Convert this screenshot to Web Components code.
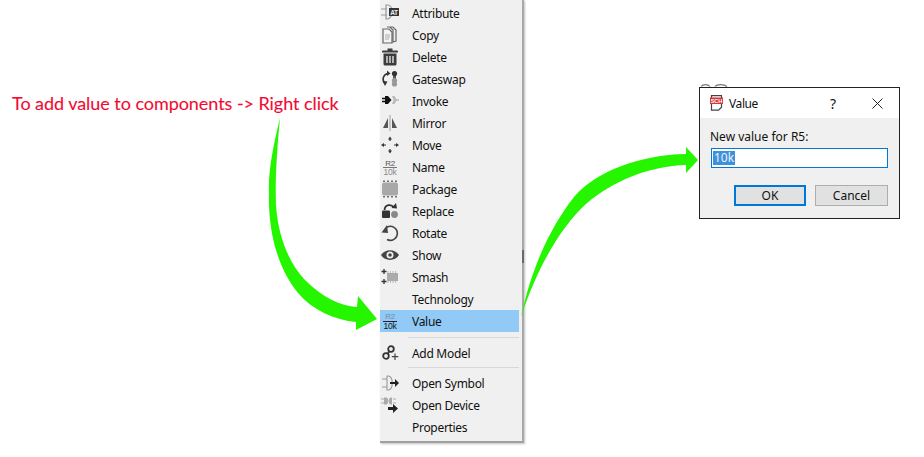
<!DOCTYPE html>
<html><head><meta charset="utf-8">
<style>html,body{margin:0;padding:0;background:#fff}</style></head>
<body>
<wiring-page></wiring-page>
<script>
const I={
attr:'<g fill="none" stroke="#999" stroke-width="1.200"><path d="M1 6h6M1 12h6M6 2h2c5 1 6 11 0 14H6z"/></g><rect x="9" y="5" width="10" height="8" fill="#333"/><text x="14" y="11.700" font-size="6.500" font-weight="700" fill="#eee" text-anchor="middle" font-family="Liberation Sans">AT</text>',
copy:'<path d="M7 2h6l3 3v11l-3 1V5L10 2z" fill="none" stroke="#666" stroke-width="1.200"/><path d="M3 4h6l3 3v11H3z" fill="#f3f3f3" stroke="#666" stroke-width="1.200"/><path d="M5 10h5M5 12h5M5 14h4" stroke="#aaa"/>',
del:'<path d="M7.500 1.500h5v2h4.500a1 1 0 0 1 1 1v1H2v-1a1 1 0 0 1 1-1h4.500z" fill="#3c3c3c"/><path d="M3.500 6.500h13V17a1.500 1.500 0 0 1-1.500 1.500H5A1.500 1.500 0 0 1 3.500 17z" fill="#3c3c3c"/><path d="M7 9v7M10 9v7M13 9v7" stroke="#eee" stroke-width="1.300"/>',
gate:'<path d="M8 4.500C3 5.500 1.500 11 5 14.500" fill="none" stroke="#333" stroke-width="1.500"/><path d="M7 1.500l3.500 3L7 7zM2.500 12l5 .5-2.500 4.500z" fill="#333"/><circle cx="14.500" cy="4.500" r="2.600" fill="#333"/><rect x="13" y="7" width="3" height="3" fill="#555"/><circle cx="14.500" cy="11.500" r="2.600" fill="#999"/><circle cx="14.500" cy="15" r="2.600" fill="#999"/>',
inv:'<path d="M2 7.500h3M2 10.500h3" stroke="#111" stroke-width="1.300"/><path d="M5 5h3l3.500 4L8 13H5z" fill="#111"/><path d="M12 5h2.500l2.500 4-2.500 4H12l1.500-4z" fill="#bbb"/><path d="M16 9h3" stroke="#bbb" stroke-width="1.500"/>',
mir:'<path d="M10 2v16" stroke="#aaa" stroke-width="1.200"/><path d="M8 5v10H3z" fill="#555"/><path d="M12 5v10h5z" fill="#555"/>',
move:'<g fill="#333"><path d="M10 1.500l2 3H8zM10 18.500l-2-3h4zM1 10l3-2v4zM19 10l-3-2v4z"/></g><path d="M10 4v2M10 14v2M4 10h2M14 10h2" stroke="#333" stroke-width="1.200"/>',
name:'<text x="10" y="8.500" font-size="8" fill="#555" text-anchor="middle" font-family="Liberation Sans">R2</text><path d="M3 10.500h14" stroke="#777"/><text x="10" y="18" font-size="8.500" fill="#888" text-anchor="middle" font-family="Liberation Sans">10k</text>',
pack:'<rect x="2" y="3.500" width="16" height="13" rx="2" fill="#a8a8a8"/><path d="M4 1.500v1.500M8 1.500v1.500M12 1.500v1.500M16 1.500v1.500M4 17v1.500M8 17v1.500M12 17v1.500M16 17v1.500" stroke="#444" stroke-width="1.500"/>',
repl:'<rect x="2" y="9.500" width="8" height="7.500" rx="1" fill="#333"/><circle cx="14.500" cy="13.500" r="3.400" fill="#888"/><path d="M4.500 9C5 3.500 11 2.500 14 6.500" fill="none" stroke="#333" stroke-width="1.800"/><path d="M11.500 7l5.500.5-1-5.500z" fill="#333"/>',
rot:'<path d="M7 4.200A7 7 0 1 1 7 16.500" fill="none" stroke="#444" stroke-width="1.600"/><path d="M1.500 10.500l5.500-7.500 1 8z" fill="#444" transform="translate(0 -1)"/>',
show:'<path d="M1 10c4-6.500 14-6.500 18 0-4 6.500-14 6.500-18 0z" fill="#444"/><circle cx="10" cy="10" r="3.500" fill="#eee"/><circle cx="10" cy="10" r="1.800" fill="#444"/>',
smash:'<rect x="7" y="6" width="11" height="8" fill="#aaa"/><path d="M8 4.500v1M10.500 4.500v1M13 4.500v1M15.500 4.500v1M8 14.500v1M10.500 14.500v1M13 14.500v1M15.500 14.500v1" stroke="#888"/><path d="M4 2v5M1.500 4.500h5M4 12v5M1.500 14.500h5" stroke="#333" stroke-width="1.300"/>',
val:'<text x="10" y="8" font-size="8" fill="#7b8da1" text-anchor="middle" font-family="Liberation Sans">R2</text><path d="M3 10.500h14" stroke="#223"/><text x="10" y="18" font-size="8.500" fill="#111" text-anchor="middle" font-family="Liberation Sans">10k</text>',
model:'<circle cx="6" cy="13" r="2.800" fill="none" stroke="#333" stroke-width="1.800"/><circle cx="11" cy="6" r="2.800" fill="none" stroke="#333" stroke-width="1.800"/><path d="M7.500 11l2-3" stroke="#333" stroke-width="1.800"/><path d="M15 10.500v6.500M11.800 13.700h6.500" stroke="#444" stroke-width="1.200"/>',
osym:'<path d="M2 6h5M2 14h5M7 3h1.500c5 1 5 13 0 14H7z" fill="none" stroke="#999" stroke-width="1.100"/><path d="M10 9h5V6l4 4-4 4v-3h-5z" fill="#222"/>',
odev:'<path d="M4 2.500v7h2c3 0 3-7 0-7zM12 2.500v7h-1c-3 0-3-7 0-7z" fill="#aaa"/><path d="M1 4h3M1 8h3M13 4h3M13 8h3" stroke="#aaa"/><path d="M8 12h5V9l5 4.500-5 4.500v-3H8z" fill="#222"/>'
};
const svg=(k)=>k?`<svg viewBox="0 0 20 20" width="20" height="20">${I[k]}</svg>`:'';

class MenuItem extends HTMLElement{
  constructor(){super();const s=this.attachShadow({mode:'open'});
    s.innerHTML=`<style>
    :host{display:flex;align-items:center;height:22px;color:#111;font:12px "Noto Sans","Open Sans",sans-serif;letter-spacing:-.3px}
    :host([active]){background:#91c9f7}
    .i{width:20px;height:20px;flex:none}
    .t{margin-left:12px;white-space:nowrap}
    svg{display:block}
    </style><div class="i"></div><div class="t"><slot></slot></div>`}
  connectedCallback(){this.shadowRoot.querySelector('.i').innerHTML=svg(this.getAttribute('icon'))}
}
customElements.define('menu-item',MenuItem);

class MenuSep extends HTMLElement{
  constructor(){super();this.attachShadow({mode:'open'}).innerHTML=`<style>:host{display:block;height:1px;margin:4px 0 4px 28px;background:#d8d8d8}</style>`}
}
customElements.define('menu-sep',MenuSep);

class ContextMenu extends HTMLElement{
  constructor(){super();this.attachShadow({mode:'open'}).innerHTML=`<style>
  :host{display:block;width:139px;padding:2px 3px 3px 0;background:#f0f0f0;border-right:2px solid #a8a8a8;border-bottom:2px solid #a0a0a0;box-shadow:1px 1px 2px rgba(0,0,0,.25)}
  </style><slot></slot>`}
}
customElements.define('context-menu',ContextMenu);

class DlgButton extends HTMLElement{
  constructor(){super();this.attachShadow({mode:'open'}).innerHTML=`<style>
  :host{display:flex;align-items:center;justify-content:center;box-sizing:border-box;height:21px;background:#e1e1e1;border:1px solid #adadad;color:#111;font:12px "Noto Sans","Open Sans",sans-serif}
  :host([default]){border:2px solid #0078d7}
  </style><slot></slot>`}
}
customElements.define('dlg-button',DlgButton);

class ValueDialog extends HTMLElement{
  constructor(){super();this.attachShadow({mode:'open'}).innerHTML=`<style>
  :host{display:block;box-sizing:border-box;width:201px;height:132px;border:1px solid #222;background:#f0f0f0;color:#111;font:12px "Noto Sans","Open Sans",sans-serif}
  .bar{height:30px;background:#fff;display:flex;align-items:center;padding:0 0 0 10px}
  .bar svg{flex:none;display:block}
  .title{margin-left:6px;flex:1;letter-spacing:-.4px}
  .q{width:12px;margin-right:33px;font-size:14px;text-align:center}
  .x{margin-right:16px}
  .body{padding:9px 11px 0 11px}
  .lbl{height:21px;line-height:20px;margin-left:-1px}
  .field{box-sizing:border-box;height:20px;background:#fff;border:1px solid #0078d7;padding:1px 1px;display:flex;align-items:center}
  .sel{background:#3f8fdc;color:#eaf3fb;padding:0 1px;line-height:14px}
  .btns{display:flex;justify-content:flex-end;gap:9px;margin-top:17px}
  dlg-button{width:72px}
  dlg-button+dlg-button{width:73px}
  </style>
  <div class="bar">
    <svg width="13" height="16" viewBox="0 0 13 16"><path d="M1.500.7h10v11.500l-3 3h-7z" fill="#fff" stroke="#444" stroke-width="1.200"/><rect x="0" y="2.500" width="13" height="6.500" fill="#d8353a"/><text x="6.500" y="8" font-size="5.500" font-weight="700" fill="#fff" text-anchor="middle" font-family="Liberation Sans">SCH</text></svg>
    <span class="title">Value</span><span class="q">?</span>
    <svg class="x" width="11" height="11" viewBox="0 0 11 11"><path d="M.5.500l10 10M10.500.500l-10 10" stroke="#222" stroke-width="1"/></svg>
  </div>
  <div class="body">
    <div class="lbl">New value for R5:</div>
    <div class="field"><span class="sel">10k</span></div>
    <div class="btns"><dlg-button default>OK</dlg-button><dlg-button>Cancel</dlg-button></div>
  </div>`}
}
customElements.define('value-dialog',ValueDialog);

class WiringPage extends HTMLElement{
  constructor(){super();this.attachShadow({mode:'open'}).innerHTML=`<style>
  :host{display:block;position:relative;width:924px;height:457px;overflow:hidden;background:#fff}
  .row{display:flex;align-items:flex-start}
  .note{width:380px;flex:none;box-sizing:border-box;padding:92px 0 0 12px;color:#f20a32;font:18px "Lato","Open Sans",sans-serif;white-space:nowrap;letter-spacing:-.05px;-webkit-text-stroke:.1px #f20a32}
  .dlgwrap{margin:87px 0 0 175px}
  .arrows{position:absolute;left:0;top:0;pointer-events:none}
  .ghost{position:absolute;left:700px;top:83px;pointer-events:none}
  </style>
  <div class="row">
    <div class="note">To add value to components -&gt; Right click</div>
    <context-menu>
      <menu-item icon="attr">Attribute</menu-item>
      <menu-item icon="copy">Copy</menu-item>
      <menu-item icon="del">Delete</menu-item>
      <menu-item icon="gate">Gateswap</menu-item>
      <menu-item icon="inv">Invoke</menu-item>
      <menu-item icon="mir">Mirror</menu-item>
      <menu-item icon="move">Move</menu-item>
      <menu-item icon="name">Name</menu-item>
      <menu-item icon="pack">Package</menu-item>
      <menu-item icon="repl">Replace</menu-item>
      <menu-item icon="rot">Rotate</menu-item>
      <menu-item icon="show">Show</menu-item>
      <menu-item icon="smash">Smash</menu-item>
      <menu-item>Technology</menu-item>
      <menu-item icon="val" active>Value</menu-item>
      <menu-sep style="margin-top:5px;margin-bottom:4px"></menu-sep>
      <menu-item icon="model">Add Model</menu-item>
      <menu-sep style="margin-top:3px"></menu-sep>
      <menu-item icon="osym">Open Symbol</menu-item>
      <menu-item icon="odev">Open Device</menu-item>
      <menu-item>Properties</menu-item>
    </context-menu>
    <div class="dlgwrap"><value-dialog></value-dialog></div>
  </div>
  <svg class="ghost" width="30" height="4" viewBox="0 0 30 4"><path d="M1 3.500C3 1 8 1 10 3.500M15 3.500C17 1 24 1 27 3.500" stroke="#777" stroke-width="1.200" fill="none"/></svg>
  <svg class="arrows" width="924" height="457" viewBox="0 0 924 457">
    <path d="M523 250v13" stroke="#555" stroke-width="1.500"/>
    <path fill="#26f500" d="M280 118C272 150 268 175 269 193C268 225 275 265 298 293C312 310 335 320 356 322L356 330L377 319L358 296L357 307C340 306 322 297 305 280C288 262 278 235 276 205C275 180 277 150 280 118Z"/>
    <path fill="#26f500" d="M521 317C532 265 552 225 574 197C596 171 640 155 686 154V147L698 160L686 173V165C650 166 614 180 586 204C560 228 537 268 521 317Z"/>
  </svg>`}
}
customElements.define('wiring-page',WiringPage);
</script>
</body></html>
